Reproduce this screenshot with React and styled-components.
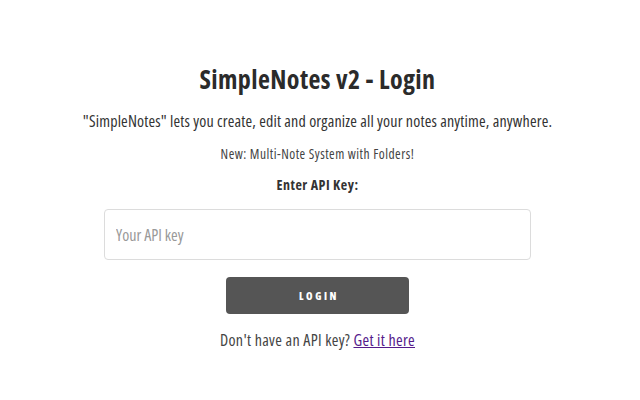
import React from "react";
import styled, { createGlobalStyle } from "styled-components";

const GlobalStyle = createGlobalStyle`
  body {
    margin: 0;
    background: #fff;
    font-family: "Open Sans", "Noto Sans", sans-serif;
    font-stretch: 80%;
    color: #333;
  }
`;

const Page = styled.div`
  display: flex;
  flex-direction: column;
  align-items: center;
  padding: 61px 5px 0 0;
`;

const Title = styled.h1`
  margin: 0;
  font-size: 26px;
  font-weight: 700;
  line-height: 36px;
  letter-spacing: 0.4px;
  color: #2b2b2b;
`;

const Lead = styled.p`
  margin: 13px 0 0;
  font-size: 16px;
  line-height: 22px;
  letter-spacing: 0.18px;
  color: #333;
`;

const Note = styled.p`
  margin: 13px 0 0;
  font-size: 13.5px;
  line-height: 18px;
  letter-spacing: 0.5px;
  color: #444;
`;

const Label = styled.label`
  margin-top: 12px;
  font-size: 14px;
  font-weight: 700;
  line-height: 20px;
  letter-spacing: 0.5px;
  color: #333;
`;

const Input = styled.input`
  box-sizing: border-box;
  margin-top: 14px;
  width: 427px;
  height: 51px;
  padding: 0 11px;
  border: 1px solid #dcdcdc;
  border-radius: 4px;
  font-family: inherit;
  font-stretch: inherit;
  font-size: 16px;
  color: #333;
  outline: none;
  &::placeholder {
    color: #999;
  }
`;

const Button = styled.button`
  margin-top: 17px;
  width: 183px;
  height: 37px;
  padding: 0 0 0 3px;
  border: none;
  border-radius: 4px;
  background: #555;
  color: #fff;
  font-family: inherit;
  font-stretch: inherit;
  font-size: 10.5px;
  font-weight: 800;
  letter-spacing: 2.6px;
  text-transform: uppercase;
  cursor: pointer;
`;

const Footer = styled.p`
  margin: 15px 0 0;
  font-size: 16px;
  line-height: 22px;
  letter-spacing: 0.33px;
  color: #444;
  a {
    color: #551a8b;
  }
`;

export default function App() {
  return (
    <>
      <GlobalStyle />
      <Page>
        <Title>SimpleNotes v2 - Login</Title>
        <Lead>"SimpleNotes" lets you create, edit and organize all your notes anytime, anywhere.</Lead>
        <Note>New: Multi-Note System with Folders!</Note>
        <Label htmlFor="key">Enter API Key:</Label>
        <Input id="key" type="text" placeholder="Your API key" />
        <Button>Login</Button>
        <Footer>
          Don't have an API key? <a href="#">Get it here</a>
        </Footer>
      </Page>
    </>
  );
}
